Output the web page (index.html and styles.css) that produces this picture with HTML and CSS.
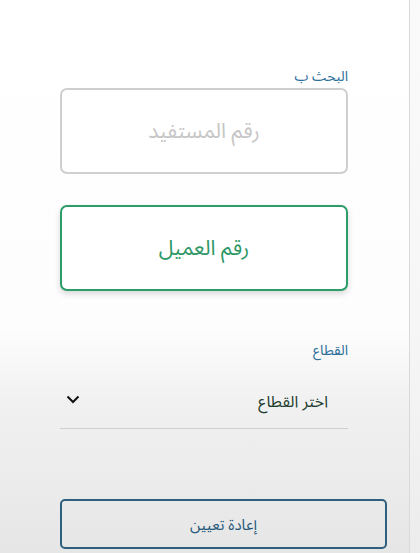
FILE: index.html
```html
<!DOCTYPE html>
<html lang="ar">
<head>
<meta charset="utf-8">
<link rel="stylesheet" href="styles.css">
</head>
<body>
<div class="page">
  <div class="panel">
    <div class="form" dir="rtl">
      <div class="label search-label">البحث ب</div>
      <div class="option option-idle">رقم المستفيد</div>
      <div class="option option-active">رقم العميل</div>
      <div class="label sector-label">القطاع</div>
      <div class="select">
        <span class="select-text">اختر القطاع</span>
        <svg class="chevron" width="14" height="9" viewBox="0 0 14 9"><path d="M1.5 1.5 L7 7 L12.5 1.5" fill="none" stroke="#111" stroke-width="2"/></svg>
      </div>
      <div class="reset">إعادة تعيين</div>
    </div>
  </div>
  <div class="edge"></div>
</div>
</body>
</html>
```
FILE: styles.css
```css
html, body {
  margin: 0;
  padding: 0;
  height: 100%;
}
body {
  font-family: "Noto Sans Arabic", "DejaVu Sans", sans-serif;
  background: #f4f4f4;
}
.page {
  display: flex;
  flex-direction: row;
  height: 553px;
  overflow: hidden;
}
.panel {
  width: 409px;
  height: 553px;
  background: linear-gradient(to bottom, #ffffff 0px, #fdfdfd 330px, #f1f1f1 400px, #e6e6e6 553px);
  border-right: 1px solid #d9d9d9;
}
.edge {
  flex: 1;
  background: linear-gradient(to bottom, #fafafa 0px, #f6f6f6 330px, #ececec 553px);
}
.form {
  width: 288px;
  margin-left: 60px;
  display: flex;
  flex-direction: column;
  padding-top: 67px;
}
.label {
  font-size: 14px;
  color: #2a6f9b;
  line-height: 20px;
}
.search-label {
  margin-bottom: 1px;
}
.option {
  box-sizing: border-box;
  height: 86px;
  border-radius: 7px;
  display: flex;
  align-items: center;
  justify-content: center;
  font-size: 21px;
  background: #fff;
}
.option-idle {
  border: 2px solid #cfcfcf;
  color: #c6c6c6;
}
.option-active {
  margin-top: 31px;
  border: 2px solid #2c9c68;
  color: #2e9766;
  box-shadow: 0 3px 6px rgba(0,0,0,0.15);
}
.sector-label {
  margin-top: 50px;
}
.select {
  display: flex;
  align-items: center;
  justify-content: space-between;
  height: 52px;
  padding: 8px 20px 0 6px;
  border-bottom: 1px solid #cfcfcf;
  margin-top: 7px;
}
.select-text {
  font-size: 16px;
  color: #1d3d30;
}
.chevron {
  margin-top: -6px;
}
.reset {
  box-sizing: border-box;
  width: 327px;
  height: 50px;
  margin-top: 70px;
  margin-right: -39px;
  border: 2px solid #2e5f7e;
  border-radius: 5px;
  display: flex;
  align-items: center;
  justify-content: center;
  font-size: 15px;
  color: #24577a;
  padding-top: 2px;
}
```
